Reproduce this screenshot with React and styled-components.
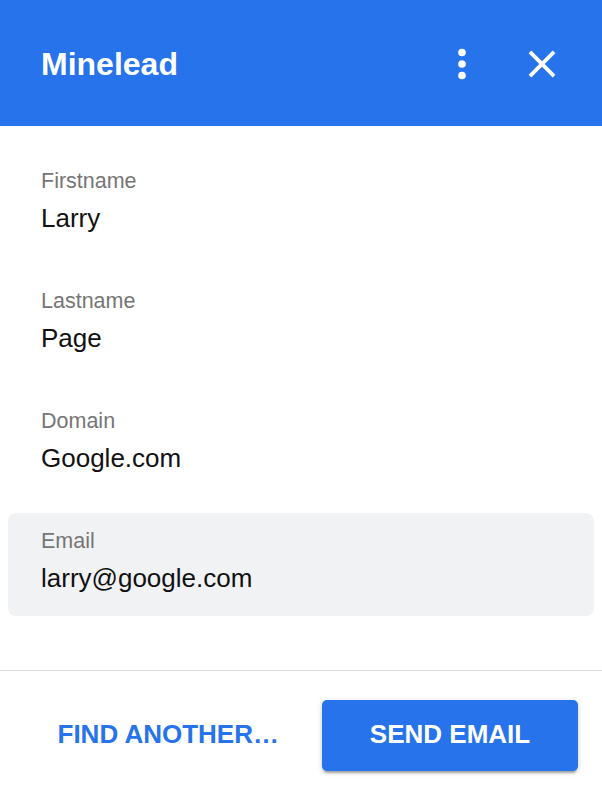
import React from "react";
import styled, { createGlobalStyle } from "styled-components";

const GlobalStyle = createGlobalStyle`
  html, body {
    margin: 0;
    padding: 0;
    background: #ffffff;
    font-family: "Liberation Sans", Arial, sans-serif;
  }
  * {
    box-sizing: border-box;
  }
`;

const fields = [
  { label: "Firstname", value: "Larry" },
  { label: "Lastname", value: "Page" },
  { label: "Domain", value: "Google.com" },
  { label: "Email", value: "larry@google.com", highlight: true },
];

function MoreIcon() {
  return (
    <svg width="46" height="46" viewBox="0 0 24 24" fill="#ffffff">
      <circle cx="12" cy="6" r="2" />
      <circle cx="12" cy="12" r="2" />
      <circle cx="12" cy="18" r="2" />
    </svg>
  );
}

function CloseIcon() {
  return (
    <svg width="46" height="46" viewBox="0 0 24 24" fill="#ffffff">
      <path d="M19 6.41L17.59 5 12 10.59 6.41 5 5 6.41 10.59 12 5 17.59 6.41 19 12 13.41 17.59 19 19 17.59 13.41 12z" />
    </svg>
  );
}

function App() {
  return (
    <Page>
      <GlobalStyle />
      <Header>
        <Title>Minelead</Title>
        <Actions>
          <IconButton aria-label="More">
            <MoreIcon />
          </IconButton>
          <IconButton aria-label="Close">
            <CloseIcon />
          </IconButton>
        </Actions>
      </Header>

      <Content>
        {fields.map((f) => (
          <Field key={f.label} $highlight={f.highlight}>
            <Label>{f.label}</Label>
            <Value>{f.value}</Value>
          </Field>
        ))}
      </Content>

      <Footer>
        <TextButton>FIND ANOTHER…</TextButton>
        <PrimaryButton>SEND EMAIL</PrimaryButton>
      </Footer>
    </Page>
  );
}

export default App;

const Page = styled.div`
  width: 602px;
  height: 800px;
  display: flex;
  flex-direction: column;
  background: #ffffff;
  overflow: hidden;
`;

const Header = styled.div`
  height: 126px;
  flex-shrink: 0;
  background: #2673eb;
  display: flex;
  align-items: center;
  justify-content: space-between;
  padding: 2px 37px 0 41px;
`;

const Title = styled.div`
  color: #ffffff;
  font-size: 32px;
  font-weight: bold;
`;

const Actions = styled.div`
  display: flex;
  align-items: center;
  gap: 34px;
`;

const IconButton = styled.button`
  width: 46px;
  height: 46px;
  padding: 0;
  border: none;
  background: transparent;
  display: flex;
  align-items: center;
  justify-content: center;
  cursor: pointer;

  svg {
    display: block;
  }
`;

const Content = styled.div`
  flex: 1;
  display: flex;
  flex-direction: column;
  gap: 17px;
  padding: 27px 8px 0;
`;

const Field = styled.div`
  height: 103px;
  display: flex;
  flex-direction: column;
  gap: 9px;
  padding: 16px 33px 22px;
  border-radius: 8px;
  background: ${(p) => (p.$highlight ? "#f1f2f4" : "transparent")};
`;

const Label = styled.div`
  font-size: 21.5px;
  line-height: 25px;
  color: #767676;
`;

const Value = styled.div`
  font-size: 26px;
  line-height: 31px;
  color: #111111;
`;

const Footer = styled.div`
  flex-shrink: 0;
  height: 130px;
  border-top: 1px solid #dcdcdc;
  display: flex;
  align-items: center;
  justify-content: flex-end;
  gap: 22px;
  padding: 0 24px;
`;

const TextButton = styled.button`
  height: 71px;
  padding: 0 21px 3px;
  border: none;
  background: transparent;
  color: #2673eb;
  font-family: "Liberation Sans", Arial, sans-serif;
  font-size: 26px;
  font-weight: bold;
  cursor: pointer;
`;

const PrimaryButton = styled.button`
  width: 256px;
  height: 71px;
  padding: 0 0 3px;
  border: none;
  border-radius: 5px;
  background: #2673eb;
  color: #ffffff;
  font-family: "Liberation Sans", Arial, sans-serif;
  font-size: 26px;
  font-weight: bold;
  cursor: pointer;
  box-shadow: 0 4px 2px -2px rgba(0, 0, 0, 0.2), 0 2px 3px rgba(0, 0, 0, 0.14),
    0 1px 6px rgba(0, 0, 0, 0.12);
`;
